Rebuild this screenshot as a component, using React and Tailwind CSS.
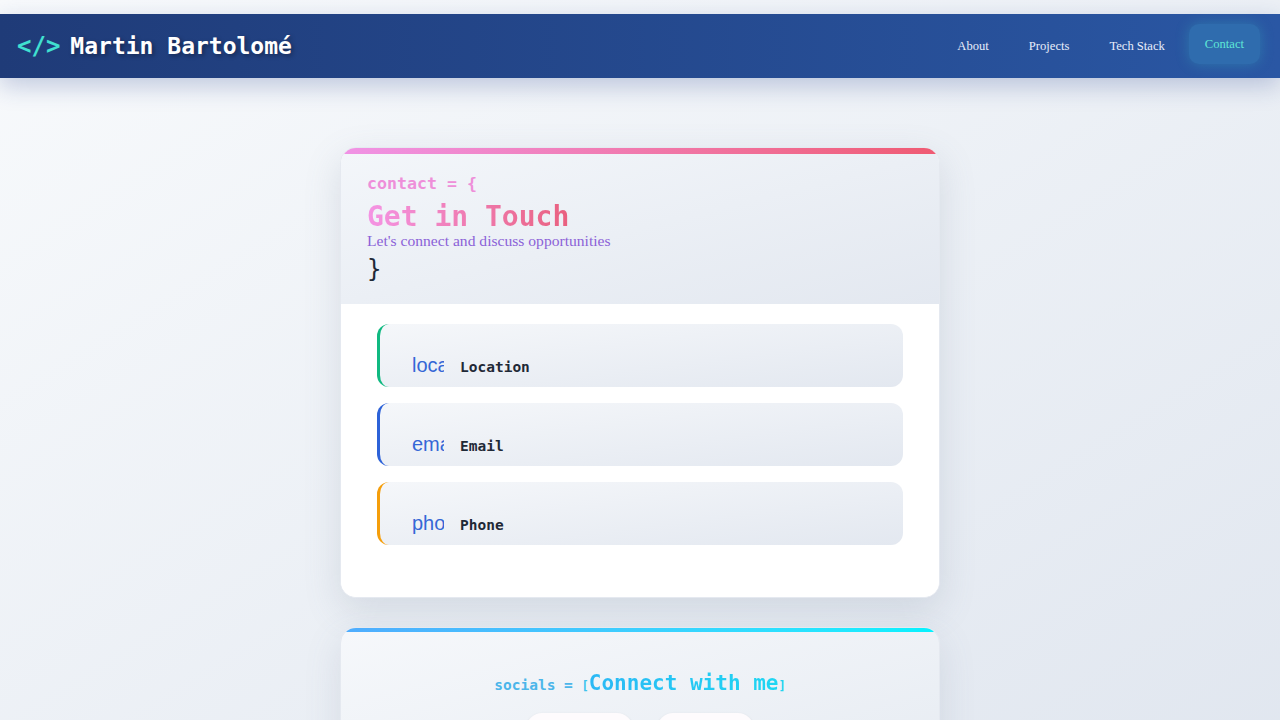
import React from 'react';

const mono = { fontFamily: '"DejaVu Sans Mono", "Liberation Mono", monospace' };

const items = [
  { icon: 'location_on', label: 'Location', border: 'border-[#10b981]' },
  { icon: 'email', label: 'Email', border: 'border-[#2d62d8]' },
  { icon: 'phone', label: 'Phone', border: 'border-[#f59e0b]' },
];

const App = () => {
  return (
    <div className="min-h-[720px] bg-gradient-to-br from-[#f8fafc] to-[#e0e6ef] font-['Liberation_Serif',serif]">
      <div className="h-[14px]" />

      {/* Navbar */}
      <nav className="h-16 flex items-center justify-between pl-[17px] pr-[20px] bg-gradient-to-r from-[#1f3b78] to-[#2a57a4] shadow-[0_8px_24px_rgba(30,58,138,0.25)]">
        <div className="flex items-center gap-[10px] font-bold" style={mono}>
          <span className="text-[24px] text-[#40e0d0]">&lt;/&gt;</span>
          <span className="text-[23px] text-white [text-shadow:2px_2px_4px_rgba(0,0,0,0.35)]">Martin Bartolomé</span>
        </div>
        <div className="flex items-center gap-2 text-[12.6px] leading-4 text-[#e8eefa]">
          <a className="px-4 py-3">About</a>
          <a className="px-4 py-3">Projects</a>
          <a className="px-4 py-3">Tech Stack</a>
          <a className="px-4 py-3 -translate-y-0.5 rounded-[10px] bg-[#2f6cae] text-[#5ee6d6] shadow-[0_0_14px_rgba(64,224,208,0.25)]">Contact</a>
        </div>
      </nav>

      <main className="flex flex-col items-center pt-[69px]">
        {/* Contact card */}
        <section className="w-[600px] rounded-2xl overflow-hidden bg-white border border-[#e5e9f0] shadow-[0_12px_36px_rgba(100,116,139,0.18)]">
          <div className="h-1.5 bg-gradient-to-r from-[#f093e6] to-[#ef5a72]" />
          <div className="bg-gradient-to-br from-[#f3f6fa] to-[#e3e8f0] pt-[17px] pb-[21px] px-[26px]">
            <div className="text-[16.6px] leading-[26px] font-bold text-[#ee8fd9]" style={mono}>contact = {'{'}</div>
            <h1
              className="mt-[4px] text-[28px] leading-[31px] font-bold bg-gradient-to-r from-[#f494e4] to-[#e9607f] bg-clip-text text-transparent w-fit"
              style={mono}
            >
              Get in Touch
            </h1>
            <p className="text-[15.6px] leading-[18px] text-[#8b62d8]">Let's connect and discuss opportunities</p>
            <div className="mt-[5px] text-[24px] leading-[28px] text-[#1f2937]" style={mono}>{'}'}</div>
          </div>
          <div className="bg-white px-[36px] pt-5 pb-[52px] flex flex-col gap-4">
            {items.map((it) => (
              <div
                key={it.label}
                className={`h-[63px] rounded-xl border-l-[3px] ${it.border} bg-gradient-to-br from-[#f5f7fa] to-[#e3e8f0] pl-8 pt-[27px] flex items-baseline`}
              >
                <span className="w-8 mr-4 overflow-hidden whitespace-nowrap text-[20px] leading-7 text-[#3567d6] font-['Liberation_Sans',sans-serif]">
                  {it.icon}
                </span>
                <span className="text-[14.5px] font-bold text-[#1f2937]" style={mono}>{it.label}</span>
              </div>
            ))}
          </div>
        </section>

        {/* Socials card */}
        <section className="mt-[29px] w-[600px] rounded-t-2xl overflow-hidden border border-[#e5e9f0] bg-gradient-to-br from-[#f6f8fb] to-[#e6ebf2] shadow-[0_12px_36px_rgba(100,116,139,0.15)]">
          <div className="h-1 bg-gradient-to-r from-[#4facfe] to-[#00f2fe]" />
          <div className="pt-[37px] pb-8 flex flex-col items-center">
            <div className="flex items-baseline font-bold" style={mono}>
              <span className="text-[14.5px] text-[#4cb6ea] whitespace-pre">socials = </span>
              <span className="text-[12px] text-[#3ec4ee]">[</span>
              <span className="text-[21px] leading-7 bg-gradient-to-r from-[#2bb8f5] to-[#1fd6f2] bg-clip-text text-transparent">Connect with me</span>
              <span className="text-[12px] text-[#22d3ee]">]</span>
            </div>
            <div className="mt-4 flex gap-6">
              <button className="w-[107px] py-3 rounded-2xl bg-[#fefbfd] shadow-sm text-sm text-[#1f2937]">GitHub</button>
              <button className="w-[97px] py-3 rounded-2xl bg-[#fefbfd] shadow-sm text-sm text-[#1f2937]">LinkedIn</button>
            </div>
          </div>
        </section>
      </main>
    </div>
  );
};

export default App;
